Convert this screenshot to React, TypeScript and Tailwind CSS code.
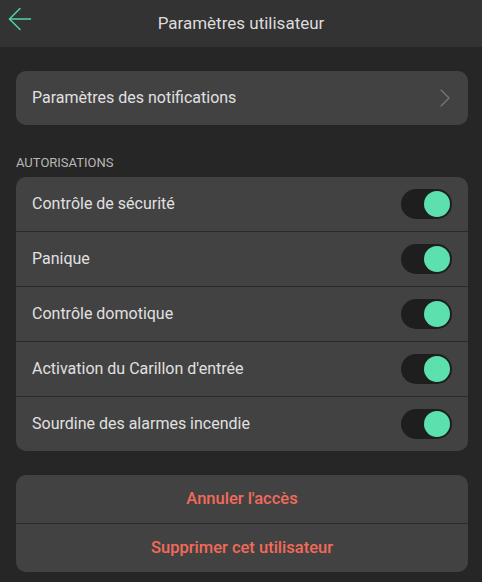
import { ArrowLeft, ChevronRight } from "lucide-react";

const permissions = [
  "Contrôle de sécurité",
  "Panique",
  "Contrôle domotique",
  "Activation du Carillon d'entrée",
  "Sourdine des alarmes incendie",
];

function Toggle() {
  return (
    <div className="flex h-[30px] w-[51px] items-center justify-end rounded-full bg-[#1e1e1e] px-[2px]">
      <div className="h-[26px] w-[26px] rounded-full bg-[#5ce1ae]" />
    </div>
  );
}

export default function App() {
  return (
    <div
      className="flex h-[582px] w-[482px] flex-col bg-[#262626] text-[#e0e0e0]"
      style={{ fontFamily: "Roboto, sans-serif" }}
    >
      <div className="relative flex h-[47px] items-center justify-center bg-[#333333]">
        <ArrowLeft size={36} strokeWidth={1} className="absolute left-[1.5px] top-[0.5px] text-[#4fd6a0]" />
        <span className="text-[17px] text-[#dcdcdc]">Paramètres utilisateur</span>
      </div>

      <div className="flex flex-col pl-4 pr-[14px] pt-6">
        <div className="flex h-[54px] items-center justify-between rounded-[10px] bg-[#424242] pl-4 pr-[7px]">
          <span className="text-[16px]">Paramètres des notifications</span>
          <ChevronRight size={32} strokeWidth={0.8} className="text-[#7a7a7a]" />
        </div>

        <div className="mt-[29px] mb-[5px] text-[13px] leading-[18px] text-[#b8b8b8]">AUTORISATIONS</div>

        <div className="flex flex-col gap-px overflow-hidden rounded-[10px] bg-[#2a2a2a]">
          {permissions.map((p) => (
            <div key={p} className="flex h-[54px] items-center justify-between bg-[#424242] pl-4 pr-4">
              <span className="text-[16px]">{p}</span>
              <Toggle />
            </div>
          ))}
        </div>

        <div className="mt-6 flex flex-col gap-px overflow-hidden rounded-[10px] bg-[#2a2a2a]">
          <div className="flex h-[48px] items-center justify-center bg-[#424242] text-[16.5px] font-medium text-[#f26a5a]">
            Annuler l'accès
          </div>
          <div className="flex h-[48px] items-center justify-center bg-[#424242] text-[16.5px] font-medium text-[#f26a5a]">
            Supprimer cet utilisateur
          </div>
        </div>
      </div>
    </div>
  );
}
